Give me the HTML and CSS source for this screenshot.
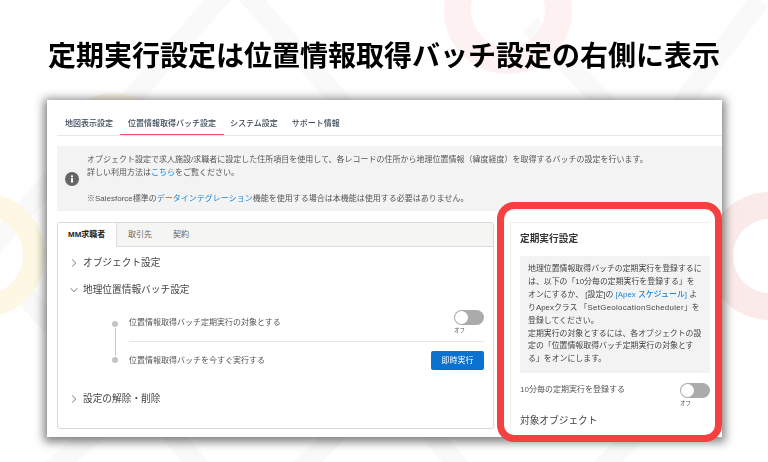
FILE: index.html
```html
<!DOCTYPE html>
<html lang="ja">
<head>
<meta charset="utf-8">
<title>定期実行設定</title>
<link rel="stylesheet" href="styles.css">
</head>
<body>
<div class="slide">
  <svg class="decor" viewBox="0 0 768 462" aria-hidden="true">
    <g fill="none" stroke="#f9f9fa" stroke-width="20">
      <path d="M130 100 L235 -20 L400 170"/>
      <path d="M530 25 L660 160"/>
      <path d="M670 120 L760 0"/>
      <path d="M60 170 L-10 250"/>
      <path d="M15 285 L70 345"/>
      <path d="M40 480 L110 420"/>
      <path d="M160 420 L210 480"/>
      <path d="M290 480 L350 420"/>
      <path d="M420 420 L470 480"/>
      <path d="M590 480 L650 420"/>
    </g>
    <g fill="none">
      <circle cx="508" cy="10" r="50.5" stroke="#fef1f1" stroke-width="27"/>
      <circle cx="115" cy="149" r="46" stroke="#fdf4e8" stroke-width="20"/>
      <circle cx="-17" cy="255" r="51" stroke="#fdf7e4" stroke-width="22"/>
      <circle cx="770" cy="256" r="50.5" stroke="#fbeaea" stroke-width="27"/>
    </g>
  </svg>

  <h1 class="headline">定期実行設定は位置情報取得バッチ設定の右側に表示</h1>

  <div class="shot">
    <nav class="top-tabs">
      <span class="top-tab">地図表示設定</span>
      <span class="top-tab is-active">位置情報取得バッチ設定</span>
      <span class="top-tab">システム設定</span>
      <span class="top-tab">サポート情報</span>
    </nav>

    <div class="notice">
      <span class="info-icon">
        <svg viewBox="0 0 14 14" width="14" height="14"><circle cx="7" cy="7" r="7" fill="#666"/><rect x="6" y="6" width="2" height="4.6" fill="#fff"/><rect x="6" y="3.4" width="2" height="1.8" fill="#fff"/></svg>
      </span>
      <div class="notice-text">
        <p>オブジェクト設定で求人施設/求職者に設定した住所項目を使用して、各レコードの住所から地理位置情報（緯度経度）を取得するバッチの設定を行います。</p>
        <p>詳しい利用方法は<a>こちら</a>をご覧ください。</p>
        <p class="blank">&nbsp;</p>
        <p>※Salesforce標準の<a>データインテグレーション</a>機能を使用する場合は本機能は使用する必要はありません。</p>
      </div>
    </div>

    <div class="columns">
      <section class="card">
        <div class="card-tabs">
          <span class="card-tab is-active">MM求職者</span>
          <span class="card-tab">取引先</span>
          <span class="card-tab">契約</span>
        </div>
        <div class="accordion">
          <div class="acc-head"><svg class="chev" viewBox="0 0 8 8"><path d="M2.2 .6 L5.8 4 L2.2 7.4"/></svg>オブジェクト設定</div>
          <div class="acc-head"><svg class="chev" viewBox="0 0 8 8"><path d="M.6 2.2 L4 5.8 L7.4 2.2"/></svg>地理位置情報バッチ設定</div>
          <div class="steps">
            <div class="step step-first">
              <span class="dot"></span>
              <span class="step-label">位置情報取得バッチ定期実行の対象とする</span>
              <div class="toggle-wrap"><span class="toggle"></span><span class="off">オフ</span></div>
            </div>
            <div class="step step-last">
              <span class="dot"></span>
              <span class="step-label">位置情報取得バッチを今すぐ実行する</span>
              <span class="button">即時実行</span>
            </div>
          </div>
          <div class="acc-head acc-last"><svg class="chev" viewBox="0 0 8 8"><path d="M2.2 .6 L5.8 4 L2.2 7.4"/></svg>設定の解除・削除</div>
        </div>
      </section>

      <aside class="side">
        <h2 class="side-title">定期実行設定</h2>
        <div class="side-box">地理位置情報取得バッチの定期実行を登録するに<br>は、以下の「10分毎の定期実行を登録する」を<br>オンにするか、 [設定]の <a>[Apex スケジュール]</a> よ<br>りApexクラス 「<span class="class-name">SetGeolocationScheduler</span>」を<br>登録してください。<br>定期実行の対象とするには、各オブジェクトの設<br>定の「位置情報取得バッチ定期実行の対象とす<br>る」をオンにします。</div>
        <div class="side-row">
          <span class="side-label">10分毎の定期実行を登録する</span>
          <div class="toggle-wrap"><span class="toggle"></span><span class="off">オフ</span></div>
        </div>
        <div class="side-sub">対象オブジェクト</div>
      </aside>
    </div>
  </div>
  <div class="highlight"></div>
</div>
</body>
</html>
```
FILE: styles.css
```css
* { box-sizing: border-box; }
html, body { margin: 0; padding: 0; }
body { font-family: "Liberation Sans", "Noto Sans CJK JP", sans-serif; background: #fff; text-spacing-trim: space-all; }
p { margin: 0; }

.slide { position: relative; width: 768px; height: 462px; overflow: hidden; background: #fff; padding-top: 35px; }
.decor { position: absolute; inset: 0; width: 768px; height: 462px; }

.headline {
  position: relative; margin: 0; height: 65px;
  font-family: "Noto Sans CJK JP", sans-serif;
  font-size: 28px; line-height: 38px; font-weight: 700; color: #000;
  text-align: center; filter: blur(.3px);
}

.shot {
  position: relative; margin-left: 47px; width: 675px; height: 337px;
  background: #fff; padding: 0 0 0 10px; color: #3e3e3c;
  box-shadow: 0 2px 9px 3px rgba(0,0,0,.5);
  filter: blur(.35px);
  font-size: 8px; line-height: 13px;
}

.top-tabs { display: flex; height: 36px; border-bottom: 1px solid #e8e8e8; padding-left: 8px; gap: 14px; }
.top-tab { font-size: 8px; font-weight: 500; line-height: 13px; padding-top: 17px; color: #3c4a58; white-space: nowrap; }
.top-tab.is-active { height: 35px; margin: 0 -8px 0 -7px; padding: 17px 8px 0; border-bottom: 1.5px solid #f0505a; }

.notice { display: flex; align-items: center; height: 65px; margin-top: 10px; background: #f3f3f3; }
.info-icon { display: flex; margin-left: 8px; width: 22px; flex: none; }
.notice-text { font-size: 8px; line-height: 13px; white-space: nowrap; color: #555; }
.notice-text a, .side-box a { color: #1b86d8; }

.columns { display: flex; margin-top: 11px; }
.card { width: 437px; height: 207px; border: 1px solid #d8d8d8; border-radius: 3px; overflow: hidden; flex: none; }
.card-tabs { display: flex; height: 24px; background: #f5f5f3; border-bottom: 1px solid #ddd; }
.card-tab { padding: 5px 0 0 21px; color: #666; font-size: 8px; }
.card-tab.is-active { width: 59px; padding-left: 10px; background: #fff; border-right: 1px solid #ddd; height: 24px; color: #222; font-weight: 700; }
.card-tab.is-active + .card-tab { padding-left: 11px; }

.accordion { padding: 0 9px 0 12px; }
.acc-head { display: flex; align-items: center; height: 27px; font-size: 9.7px; color: #444; white-space: nowrap; }
.acc-head:first-child { margin-top: 2px; }
.acc-last { margin-top: 7px; }
.chev { width: 8px; height: 8px; margin-right: 5px; fill: none; stroke: #555; stroke-width: .8; }

.steps { padding-left: 42px; position: relative; margin-top: 7px; }
.step { position: relative; display: flex; align-items: center; justify-content: space-between; padding-left: 17px; font-size: 8px; color: #555; }
.step-first { height: 32px; align-items: flex-start; }
.step-first .step-label { margin-top: 6px; }
.step-first::before {
  content: ""; position: absolute; left: 17px; right: 0; bottom: 0; border-bottom: 1px solid #e5e5e5;
}
.step-first::after {
  content: ""; position: absolute; left: 2.5px; top: 18px; height: 28px; border-left: 1px solid #c8c8c8;
}
.step-last { height: 36px; }
.dot { position: absolute; left: 0; width: 6px; height: 6px; border-radius: 50%; background: #c4c4c4; }
.step-first .dot { top: 11px; }
.step-label { white-space: nowrap; }
.toggle-wrap { display: flex; flex-direction: column; width: 30px; }
.toggle { position: relative; display: block; width: 30px; height: 15px; border-radius: 8px; background: #ababab; }
.toggle::after { content: ""; position: absolute; left: 1px; top: 1px; width: 13px; height: 13px; border-radius: 50%; background: #fff; }
.off { font-size: 5.5px; line-height: 9px; color: #555; margin-top: 1px; }
.button { width: 53px; height: 19px; background: #0b72d0; border-radius: 2px; color: #fff; font-size: 8px; line-height: 19px; text-align: center; }

.side { margin-left: 16px; padding: 9px 0 0 9px; width: 200px; border-top: 1px solid #eee; border-left: 1px solid #eee; flex: none; height: 215px; }
.side-title { margin: 0; font-size: 9.7px; line-height: 14px; font-weight: 700; color: #333; }
.side-box { margin-top: 10px; width: 190px; height: 117px; padding: 7px 0 0 8px; background: #f3f3f3; font-size: 7.9px; line-height: 12.9px; color: #444; white-space: nowrap; }
.side-box a { font-weight: 500; }
.class-name { letter-spacing: .3px; }
.side-row { display: flex; justify-content: space-between; width: 190px; margin-top: 10px; font-size: 8px; color: #555; }
.side-label { line-height: 13px; }
.side-sub { margin-top: 6px; font-size: 9.7px; line-height: 14px; color: #444; }

.highlight {
  position: absolute; left: 497px; top: 202px; width: 225px; height: 240px;
  border: 7.5px solid #f44040; border-radius: 17px;
}
```
